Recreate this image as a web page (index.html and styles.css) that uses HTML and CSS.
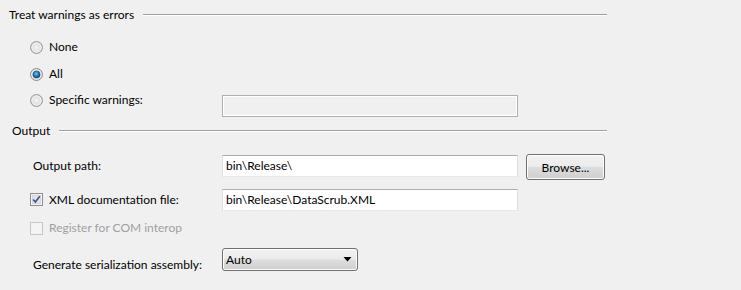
FILE: index.html
```html
<!DOCTYPE html>
<html>
<head>
<meta charset="utf-8">
<link rel="stylesheet" href="styles.css">
</head>
<body>
<div class="page">
  <div class="group-head head-warn">
    <span class="group-title">Treat warnings as errors</span>
    <span class="rule"></span>
  </div>
  <div class="row row-none">
    <span class="radio"><svg width="13" height="13" viewBox="0 0 13 13"><defs><radialGradient id="rg" cx="50%" cy="50%" r="50%"><stop offset="0" stop-color="#f4f4f4"/><stop offset="1" stop-color="#d4d4d4"/></radialGradient></defs><circle cx="6.5" cy="6.5" r="6" fill="url(#rg)" stroke="#9a9a9a"/><circle cx="6.5" cy="6.5" r="4.5" fill="none" stroke="#ffffff" stroke-opacity="0.7"/></svg></span>
    <span class="opt-label">None</span>
  </div>
  <div class="row row-all">
    <span class="radio"><svg width="13" height="13" viewBox="0 0 13 13"><defs><radialGradient id="rb" cx="45%" cy="40%" r="60%"><stop offset="0" stop-color="#6fd0f4"/><stop offset="0.6" stop-color="#1b72a8"/><stop offset="1" stop-color="#0b3f6a"/></radialGradient></defs><circle cx="6.5" cy="6.5" r="6" fill="#e6e6e6" stroke="#8a8a8a"/><circle cx="6.5" cy="6.5" r="3.6" fill="url(#rb)" stroke="#1d4f78" stroke-width="0.6"/></svg></span>
    <span class="opt-label">All</span>
  </div>
  <div class="row row-specific">
    <span class="radio"><svg width="13" height="13" viewBox="0 0 13 13"><circle cx="6.5" cy="6.5" r="6" fill="url(#rg)" stroke="#9a9a9a"/><circle cx="6.5" cy="6.5" r="4.5" fill="none" stroke="#ffffff" stroke-opacity="0.7"/></svg></span>
    <span class="opt-label label-fixed">Specific warnings:</span>
    <span class="textbox disabled"></span>
  </div>

  <div class="group-head head-out">
    <span class="group-title out-title">Output</span>
    <span class="rule"></span>
  </div>
  <div class="row row-path">
    <span class="field-label">Output path:</span>
    <span class="textbox">bin\Release\</span>
    <span class="button">Browse...</span>
  </div>
  <div class="row row-xml">
    <span class="check"><svg width="13" height="13" viewBox="0 0 13 13"><rect x="0.5" y="0.5" width="12" height="12" fill="#f4f4f4" stroke="#8e8f8f"/><rect x="2.5" y="2.5" width="8" height="8" fill="#e2e4ea" stroke="#c4c8d2" stroke-width="0.6"/><path d="M3.2 6.4 L5.4 9 L9.8 3.2" fill="none" stroke="#3d4f86" stroke-width="1.6"/></svg></span>
    <span class="opt-label label-fixed">XML documentation file:</span>
    <span class="textbox">bin\Release\DataScrub.XML</span>
  </div>
  <div class="row row-com">
    <span class="check"><svg width="13" height="13" viewBox="0 0 13 13"><rect x="0.5" y="0.5" width="12" height="12" fill="#f4f4f4" stroke="#c6c6c6"/></svg></span>
    <span class="opt-label disabled-text">Register for COM interop</span>
  </div>
  <div class="row row-gen">
    <span class="field-label gen-label">Generate serialization assembly:</span>
    <span class="select"><span>Auto</span><svg width="9" height="5" viewBox="0 0 9 5"><path d="M0.5 0 L8.5 0 L4.5 4.5 Z" fill="#000"/></svg></span>
  </div>
</div>
</body>
</html>
```
FILE: styles.css
```css
html, body {
  margin: 0;
  padding: 0;
  background: #f0f0f0;
}
body {
  font-family: "Lato", "Liberation Sans", sans-serif;
  font-size: 12px;
  color: #000;
  width: 741px;
  height: 290px;
  overflow: hidden;
}
.page {
  padding: 8px 0 0 9px;
  width: 598px;
}
.group-head {
  display: flex;
  align-items: center;
  height: 14px;
}
.group-title {
  line-height: 14px;
  white-space: nowrap;
  padding-right: 9px;
}
.out-title {
  padding-left: 3px;
  padding-right: 9px;
}
.rule {
  flex: 1;
  height: 0;
  border-top: 1px solid #a0a0a0;
  border-bottom: 1px solid #ffffff;
}
.head-out {
  margin-top: 7px;
}
.row {
  display: flex;
  align-items: center;
}
.radio, .check {
  width: 13px;
  height: 13px;
  display: block;
  margin-left: 21px;
  margin-right: 6px;
}
.radio svg, .check svg { display: block; }
.opt-label { white-space: nowrap; line-height: 14px; }
.label-fixed { width: 173px; }
.row-none { margin-top: 18px; height: 14px; }
.row-all { margin-top: 13px; height: 14px; }
.row-specific {
  margin-top: 14px;
  height: 22px;
  align-items: flex-start;
}
.row-specific .radio { margin-top: -1px; }
.row-specific .opt-label { margin-top: -2px; }
.textbox {
  box-sizing: border-box;
  width: 296px;
  height: 22px;
  background: #fff;
  border: 1px solid #dbdfe6;
  border-top-color: #abadb3;
  border-bottom-color: #e3e9ef;
  padding: 0 3px;
  line-height: 20px;
  white-space: nowrap;
}
.textbox.disabled {
  background: #f0f0f0;
  border: 1px solid #afafaf;
  box-shadow: inset 0 0 0 1px #ffffff;
}
.row-path {
  margin-top: 16px;
  height: 26px;
  align-items: flex-start;
}
.field-label {
  width: 189px;
  padding-left: 24px;
  white-space: nowrap;
  line-height: 14px;
}
.row-path .field-label { margin-top: 5px; }
.row-path .textbox { margin-top: 1px; }
.button {
  box-sizing: border-box;
  margin-left: 8px;
  width: 79px;
  height: 26px;
  border: 1px solid #707070;
  border-radius: 3px;
  background: linear-gradient(#f2f2f2 0%, #ebebeb 48%, #dddddd 52%, #cfcfcf 100%);
  box-shadow: inset 0 0 0 1px #fcfcfc;
  display: flex;
  align-items: center;
  justify-content: center;
}
.row-xml { margin-top: 9px; height: 22px; }
.row-xml .check { margin-top: -1px; }
.row-com { margin-top: 10px; height: 14px; }
.disabled-text { color: #a0a0a0; }
.row-gen {
  margin-top: 13px;
  height: 23px;
  align-items: flex-start;
}
.gen-label { margin-top: 10px; }
.select {
  box-sizing: border-box;
  width: 136px;
  height: 23px;
  border: 1px solid #707070;
  border-radius: 3px;
  background: linear-gradient(#f2f2f2 0%, #ebebeb 48%, #dddddd 52%, #cfcfcf 100%);
  box-shadow: inset 0 0 0 1px #fcfcfc;
  display: flex;
  align-items: center;
  justify-content: space-between;
  padding: 0 5px 0 3px;
}
.select svg { display: block; }
```
